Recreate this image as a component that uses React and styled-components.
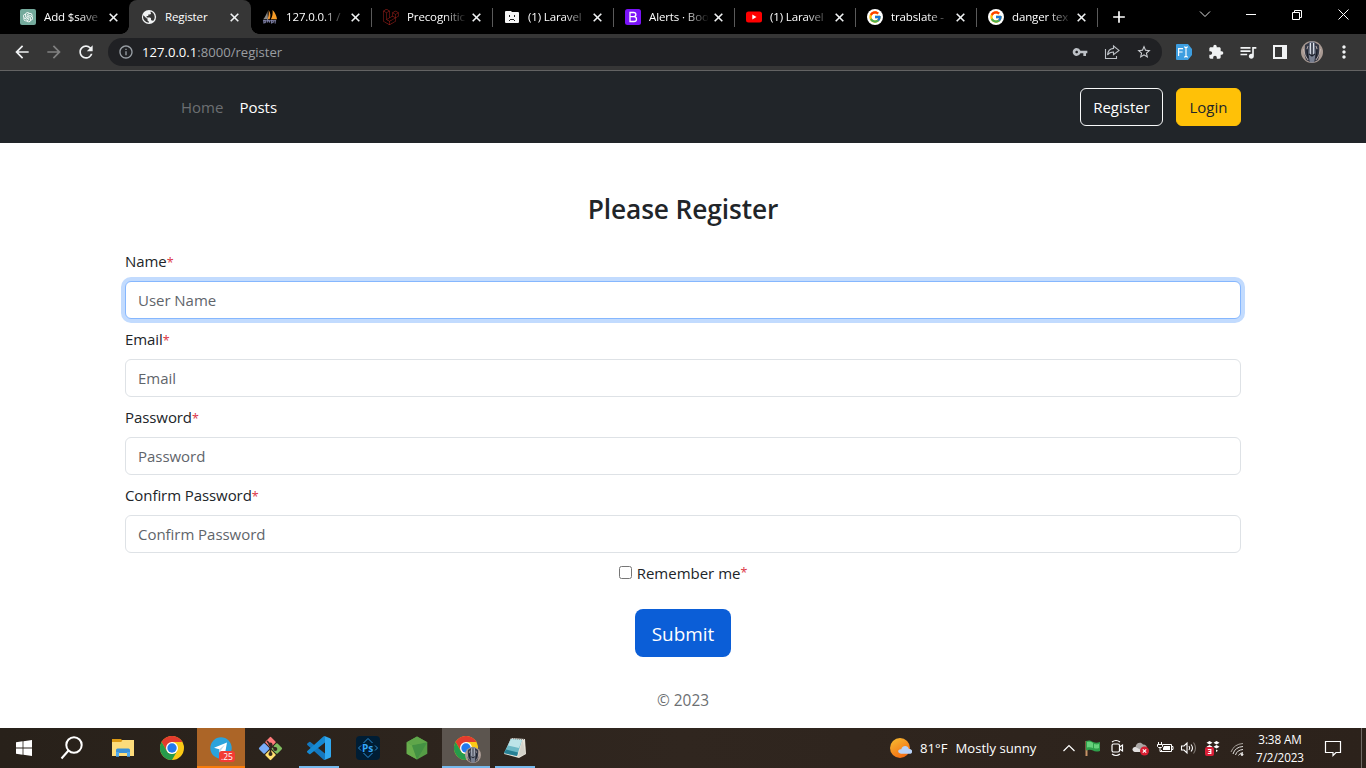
import React from "react";
import styled, { createGlobalStyle } from "styled-components";
import {
  MdArrowBack, MdArrowForward, MdRefresh, MdVpnKey, MdStarBorder, MdExtension,
  MdQueueMusic, MdMoreVert, MdAdd, MdInfoOutline,
} from "react-icons/md";
import { FaLaravel } from "react-icons/fa";
import { FcGoogle } from "react-icons/fc";
import { AiOutlineOpenAI } from "react-icons/ai";

const Global = createGlobalStyle`
  * { box-sizing: border-box; }
  body {
    margin: 0;
    background: #fff;
    font-family: "Open Sans", "Noto Sans", sans-serif;
    font-size: 15px;
    line-height: 24px;
    color: #212529;
    overflow: hidden;
  }
  svg { display: block; flex: none; }
`;

const Screen = styled.div`
  width: 1366px;
  height: 768px;
  display: flex;
  flex-direction: column;
`;

/* ---------- browser chrome ---------- */
const TabStrip = styled.div`
  height: 34px;
  flex: none;
  background: #000;
  display: flex;
  padding-left: 8px;
`;
const Tab = styled.div`
  position: relative;
  width: 121px;
  height: 34px;
  display: flex;
  align-items: center;
  padding: 0 11px 0 12px;
  background: ${(p) => (p.$active ? "#363636" : "transparent")};
  border-radius: 8px 8px 0 0;
  ${(p) =>
    p.$active &&
    `width: 122px; margin-right: -1px; padding-right: 12px;
    &::before, &::after {
      content: ""; position: absolute; bottom: 0; width: 8px; height: 8px;
    }
    &::before { left: -8px; background: radial-gradient(circle at 0 0, transparent 7.5px, #363636 8px); }
    &::after { right: -8px; background: radial-gradient(circle at 100% 0, transparent 7.5px, #363636 8px); }`}
`;
const TabTitle = styled.span`
  width: 64px;
  margin-left: 8px;
  white-space: nowrap;
  font-size: 11.5px;
  line-height: 16px;
  letter-spacing: -0.12px;
  color: #fff;
  ${(p) => p.$fade && "mask-image: linear-gradient(90deg, #000 36px, transparent 60px);"}
`;
const CloseBox = styled.span`
  margin-left: auto;
  display: flex;
`;
const Separator = styled.i`
  position: absolute;
  right: -1px;
  top: 8px;
  width: 1px;
  height: 19px;
  background: #5a5a5a;
`;
const NewTab = styled.div`
  width: 44px;
  display: flex;
  align-items: center;
  justify-content: center;
  color: #fff;
`;
const WindowControls = styled.div`
  margin-left: auto;
  display: flex;
  height: 29px;
`;
const Control = styled.div`
  width: 46px;
  display: flex;
  align-items: center;
  justify-content: center;
`;
const Toolbar = styled.div`
  height: 37px;
  flex: none;
  background: #363636;
  border-bottom: 1px solid #636363;
  display: flex;
  align-items: center;
  padding: 0 6px;
`;
const ToolButton = styled.div`
  width: 32px;
  height: 32px;
  display: flex;
  align-items: center;
  justify-content: center;
  color: ${(p) => p.$color || "#f1f3f4"};
`;
const Omnibox = styled.div`
  width: 1054px;
  height: 28px;
  margin-right: 6px;
  margin-left: 6px;
  border-radius: 14px;
  background: #202124;
  display: flex;
  align-items: center;
  padding: 0 2px 0 10px;
`;
const Url = styled.span`
  flex: 1;
  margin-left: 8px;
  font-size: 13.1px;
  line-height: 20px;
  color: #9a9da1;
  b { font-weight: 400; color: #fff; }
`;

/* ---------- page ---------- */
const Header = styled.header`
  height: 72px;
  flex: none;
  background: #212529;
  display: flex;
  align-items: center;
  padding: 0 125px 0 181px;
`;
const NavLink = styled.a`
  margin-right: 16px;
  color: ${(p) => (p.$muted ? "#6c6f72" : "#fff")};
`;
const HeaderButton = styled.button`
  width: ${(p) => p.$width}px;
  height: 38px;
  padding: 0;
  font: inherit;
  border-radius: 6px;
  border: 1px solid ${(p) => (p.$warning ? "#ffc107" : "#f8f9fa")};
  background: ${(p) => (p.$warning ? "#ffc107" : "transparent")};
  color: ${(p) => (p.$warning ? "#212529" : "#fff")};
`;
const ButtonGroup = styled.div`
  display: flex;
  gap: 13px;
  margin-left: auto;
`;
const Form = styled.form`
  flex: 1;
  display: flex;
  flex-direction: column;
  padding: 49px 125px 0;
`;
const Title = styled.h1`
  margin: 0 0 22px;
  font-size: 26.3px;
  font-weight: 600;
  line-height: 35px;
  text-align: center;
  letter-spacing: -0.1px;
`;
const Label = styled.label`
  height: 24px;
  margin-bottom: 8px;
  letter-spacing: -0.08px;
`;
const Required = styled.span`
  color: #dc3545;
  font-size: 12.5px;
`;
const Input = styled.input`
  height: 38px;
  margin-bottom: 8px;
  padding: 0 12px;
  border: 1px solid ${(p) => (p.$focused ? "#86b7fe" : "#dee2e6")};
  border-radius: 6px;
  outline: none;
  box-shadow: ${(p) => (p.$focused ? "0 0 0 4px #c2dbfe" : "none")};
  font: inherit;
  letter-spacing: -0.04px;
  &::placeholder { color: #5f656b; opacity: 1; }
`;
const Remember = styled.label`
  height: 24px;
  display: flex;
  justify-content: center;
  align-items: center;
  input { width: 13px; height: 13px; margin: -2px 5px 0 0; }
`;
const Submit = styled.button`
  width: 96px;
  height: 48px;
  margin: 24px auto 32px;
  padding: 1px 0 0;
  border: 0;
  border-radius: 8px;
  background: #0b5ed7;
  color: #fff;
  font: 18.9px/28px "Open Sans", sans-serif;
`;
const Copyright = styled.p`
  margin: 0;
  text-align: center;
  font-size: 15.4px;
  color: #6c6f72;
`;

/* ---------- taskbar ---------- */
const Taskbar = styled.footer`
  height: 40px;
  flex: none;
  background: linear-gradient(90deg, #28211a, #30261f 50%, #2c221b);
  display: flex;
  color: #fff;
`;
const TaskButton = styled.div`
  width: 48px;
  height: 40px;
  margin-right: ${(p) => p.$gap ?? 1}px;
  display: flex;
  align-items: center;
  justify-content: center;
  background: ${(p) => p.$bg || "transparent"};
  ${(p) => p.$line && `box-shadow: inset 0 -2px 0 ${p.$line};`}
`;
const Underlined = styled(TaskButton)`
  background: linear-gradient(#76b9ed, #76b9ed) center bottom / 40px 2px no-repeat;
`;
const Badged = styled.div`
  position: relative;
`;
const Badge = styled.span`
  position: absolute;
  left: 9px;
  top: 14px;
  width: 16px;
  height: 11px;
  border-radius: 3px;
  background: #f23c34;
  font: 8.5px/11px "Open Sans", sans-serif;
  text-align: center;
  color: #fff;
`;
const ProfileBadge = styled.div`
  position: absolute;
  left: 11px;
  top: 11px;
`;
const Weather = styled.div`
  margin-left: auto;
  width: 169px;
  display: flex;
  align-items: center;
  font-size: 13.15px;
  white-space: nowrap;
  span { margin-left: 8px; }
`;
const TrayIcon = styled.div`
  width: 24px;
  display: flex;
  align-items: center;
  justify-content: center;
`;
const Tray = styled.div`
  display: flex;
  margin: 0 1px 0 -1px;
`;
const Clock = styled.div`
  width: 60px;
  margin-right: 2px;
  padding-top: 2px;
  text-align: center;
  font-size: 11.7px;
  line-height: 18px;
  letter-spacing: -0.1px;
`;
const Notifications = styled.div`
  width: 42px;
  display: flex;
  align-items: center;
  justify-content: center;
`;
const ShowDesktop = styled.div`
  width: 5px;
  margin-left: 7px;
  border-left: 1px solid #706a65;
`;

/* ---------- drawings ---------- */
const CloseIcon = () => (
  <svg width="9" height="9" viewBox="0 0 9 9" stroke="#f1f3f4" strokeWidth="1.6">
    <path d="M.7.7l7.600 7.600M8.300.7L.7 8.300" />
  </svg>
);
const OpenAiIcon = () => (
  <svg width="16" height="16" viewBox="0 0 16 16">
    <rect width="16" height="16" rx="2" fill="#74aa9c" />
    <AiOutlineOpenAI x="1.5" y="1.5" size={13} color="#fff" />
  </svg>
);
const GlobeIcon = () => (
  <svg width="16" height="16" viewBox="0 0 16 16">
    <circle cx="8" cy="8" r="7.1" fill="#f1f3f4" />
    <path d="M2.4 6.2l3 3 1.1.2v2l1.3 1.2v1.1A5.7 5.7 0 0 1 2.4 6.2zM9.6 2.5c2.5.8 4.1 3 4.1 5.5 0 1.7-.7 3.1-1.7 4.1-.2-.6-.8-.9-1.5-.9H10V9.3L9 8.5H5.6V7h1.7V5.4H9c.6 0 1-.5 1-1.1l-.4-.5z" fill="#363636" />
  </svg>
);
const PhpMyAdminIcon = () => (
  <svg width="16" height="16" viewBox="0 0 17 16">
    <path d="M5.8 1.5C4.8 5 3.3 8 1.3 10.5h5z" fill="#8b8b8b" />
    <path d="M7 .5c2.2 3.2 2.5 6.4 1.1 10H5.8C7 7 7.5 4 7 .5z" fill="#e8963a" />
    <path d="M11.2.5c3.2 3.2 4.3 6.6 4.8 10H9.4C11 7.2 11.7 4.5 11.2.5z" fill="#f59c27" />
    <path d="M1 12h14M2 15v-4m0 1h2v2H2M6 10v4m0-2h2v2m2 1v-4m0 1h2v2h-2m4-3v4" stroke="#8486ad" fill="none" />
  </svg>
);
const SadFolderIcon = () => (
  <svg width="16" height="16" viewBox="0 0 16 16">
    <path d="M2 2h5l1 1h6q1 0 1 1v9q0 1-1 1H2q-1 0-1-1V3q0-1 1-1z" fill="#f5f5f5" />
    <path d="M5 6h1v2H5zM10 6h1v2h-1zM6 10h4v1H6zM5 11h1v1H5zM10 11h1v1h-1z" fill="#222" />
  </svg>
);
const BootstrapIcon = () => (
  <svg width="16" height="16" viewBox="0 0 16 16">
    <rect width="16" height="16" rx="2.5" fill="#7a13f8" />
    <path d="M5 3.5h3.6c3 0 3 3.8.2 4.2H5zM5 7.7h4c3.4.2 3.2 4.8 0 4.8H5z" fill="none" stroke="#fff" strokeWidth="1.3" />
  </svg>
);
const YouTubeIcon = () => (
  <svg width="16" height="16" viewBox="0 0 16 16">
    <rect y="2.5" width="16" height="11" rx="2.5" fill="#f00" />
    <path d="M6.3 5.6v4.8L10.5 8z" fill="#fff" />
  </svg>
);
const GoogleIcon = () => (
  <svg width="16" height="16" viewBox="0 0 16 16">
    <circle cx="8" cy="8" r="8" fill="#fff" />
    <FcGoogle x="1.2" y="1.2" size={13.6} />
  </svg>
);
const ShareIcon = () => (
  <svg width="16" height="16" viewBox="0 0 16 16" fill="none" stroke="#bdc1c6" strokeWidth="1.1">
    <path d="M1.500 5v9.500h11V12M9.500 2l5.500 4.400-5.500 4.200V8C6.500 8 4.800 9 3.500 11c.3-3.8 2.5-6.2 6-6.600z" />
  </svg>
);
const FontExtIcon = () => (
  <svg width="16" height="16" viewBox="0 0 16 16">
    <path d="M1 0h11l4 5v6l-4 5H1q-1 0-1-1V1q0-1 1-1z" fill="#3d9ee0" />
    <path d="M2.6 12V4.6H7M2.6 8h4M8 3h1l1 1 1-1h1M10 4v8M8 13h1l1-1 1 1h1" stroke="#fff" fill="none" strokeWidth="1.15" />
  </svg>
);
const SidePanelIcon = () => (
  <svg width="14" height="14" viewBox="0 0 14 14">
    <path d="M0 0h14v14H0zM2 2v10h7V2z" fill="#f1f3f4" fillRule="evenodd" />
  </svg>
);
const Avatar = ({ size = 22 }) => (
  <svg width={size} height={size} viewBox="0 0 22 22">
    <circle cx="11" cy="11" r="11" fill="#a99a93" />
    <path d="M4 4l5-3v20l-4-2-1.500-5z" fill="#343846" />
    <path d="M18 4l-5-3v20l4-2 1.500-5z" fill="#343846" />
    <path d="M8.500 .5h5l1 11-.5 5-1 5h-4l-1-5-.5-5z" fill="#787f90" />
    <path d="M9.500 2l.3 12M12.500 2l-.3 12" stroke="#dfe4ed" strokeWidth="1.100" />
    <path d="M11 2v13M6 9l1 8M16 9l-1 8M8 13l3 2 3-2" stroke="#191d28" strokeWidth="1.100" fill="none" />
    <path d="M2.500 8l1.500 6 3 5M19.500 8L18 14l-3 5M7 5l-1 3M15 5l1 3" stroke="#d0c1bb" fill="none" strokeWidth=".8" />
  </svg>
);
const WindowsIcon = () => (
  <svg width="16" height="16" viewBox="0 0 16 16" fill="#fff">
    <path d="M0 2.2L6.6 1.3V7.6H0zM7.4 1.2L16 0v7.6H7.4zM0 8.4h6.6v6.3L0 13.8zM7.4 8.4H16V16l-8.6-1.2z" />
  </svg>
);
const SearchIcon = () => (
  <svg width="24" height="24" viewBox="0 0 24 24" fill="none" stroke="#fff" strokeWidth="2">
    <circle cx="14" cy="9" r="7.7" /><path d="M8.5 14.5L1.5 22.5" />
  </svg>
);
const ExplorerIcon = () => (
  <svg width="22" height="20" viewBox="0 0 22 20">
    <path d="M0 1h8.5l1.5 1h12v16H0z" fill="#e4a01c" />
    <path d="M0 4h9l1.500-2H22v16H0z" fill="#fddc7b" />
    <path d="M0 4h9l1-1.500L8.600 1H0z" fill="#dc9a14" />
    <path d="M4 18.500v-6.500q0-1.500 1.500-1.500h11Q18 10.500 18 12v6.500h-3v-3.500H7v3.500z" fill="#3b91d8" />
    <path d="M4 14v4.500h3V14zM15 14v4.500h3V14z" fill="#4faaf0" />
  </svg>
);
const ChromeIcon = () => (
  <svg width="24" height="24" viewBox="0 0 24 24">
    <circle cx="12" cy="12" r="12" fill="#fbc916" />
    <path d="M12 6h10.400A12 12 0 0 0 1.600 6L6.800 15z" fill="#e33b2e" />
    <path d="M1.600 6A12 12 0 0 0 12 24L17.200 15A6 6 0 0 1 6.800 15z" fill="#269b4b" />
    <circle cx="12" cy="12" r="6" fill="#fff" />
    <circle cx="12" cy="12" r="4.7" fill="#2379ed" />
  </svg>
);
const TelegramIcon = () => (
  <svg width="22" height="22" viewBox="0 0 22 22">
    <circle cx="11" cy="11" r="10.700" fill="#2ba3dc" />
    <path d="M4 10.800L17 5.500 15 16.500l-3.500-2.600-1.900 2-.5-3.600z" fill="#fff" />
    <path d="M9 12.500L15 7.500l-4 5.800-1.600 2z" fill="#bed9e9" />
  </svg>
);
const GitIcon = () => (
  <svg width="25" height="25" viewBox="0 0 25 25">
    <g transform="rotate(45 12.500 12.500)">
      <rect x="4" y="4" width="8" height="8" rx="1" fill="#ff7b7b" />
      <rect x="13" y="4" width="8" height="8" rx="1" fill="#80bd5f" />
      <rect x="4" y="13" width="8" height="8" rx="1" fill="#78acf8" />
      <rect x="13" y="13" width="8" height="8" rx="1" fill="#ffe071" />
    </g>
    <path d="M9 5l3.500 4v9M12.500 9l5 4" stroke="#342720" strokeWidth="1.700" fill="none" />
    <circle cx="12.500" cy="8.500" r="2" fill="#342720" /><circle cx="17.300" cy="13" r="2" fill="#342720" /><circle cx="12.500" cy="18" r="2" fill="#342720" />
  </svg>
);
const CodeIcon = () => (
  <svg width="24" height="24" viewBox="0 0 24 24">
    <path d="M.3 7.500L2.200 6q.6-.4 1.200 0L18 17.500V24q-1 0-1.600-.6L.3 9q-.6-.7 0-1.500z" fill="#1478bf" />
    <path d="M.3 16.500L2.200 18q.6.400 1.200 0L18 6.500V0q-1 0-1.600.6L.3 15q-.6.700 0 1.500z" fill="#1689d2" />
    <path d="M17.500 0l5.500 2.300q1 .5 1 1.500v16.400q0 1-1 1.500L17.500 24q.5-.3.500-1V1q0-.7-.5-1z" fill="#30a8ef" />
  </svg>
);
const PsText = styled.text`
  font: 700 10px "Open Sans", sans-serif;
`;
const PhotoshopIcon = () => (
  <svg width="24" height="24" viewBox="0 0 24 24">
    <rect width="24" height="24" rx="4" fill="#001d34" />
    <path d="M7.500 7L12 2.500 16.500 7M7.500 17L12 21.500 16.500 17M5 9.500L2.500 12l2.500 2.500M19 9.500l2.500 2.500-2.500 2.500" fill="none" stroke="#2a8ed6" />
    <PsText x="6" y="15.500" fill="#35a6fa">Ps</PsText>
  </svg>
);
const NodeIcon = () => (
  <svg width="22" height="24" viewBox="0 0 22 24">
    <path d="M11 .5l10.300 5.800v11.400L11 23.500.7 17.700V6.300z" fill="#559c45" />
    <path d="M.7 6.300L6 9.300 11 23.500.7 17.700z" fill="#68ad4c" />
    <path d="M6 9.300L21.300 6.300 11 23.500z" fill="#449143" />
    <path d="M11 .5l10.300 5.800L6 9.300.7 6.300z" fill="#5fa64a" />
  </svg>
);
const NotepadIcon = () => (
  <svg width="24" height="24" viewBox="0 0 24 24">
    <path d="M8 2l14 1 1 15-7 4-15-4z" fill="#e6e3d9" />
    <path d="M8 3l11 1-5 16L1 17z" fill="#6bb8c5" />
    <path d="M8 3l11 1-3 8L5 9.500z" fill="#bce4e8" />
    <path d="M1 17l13 3 1-3.500-12-3z" fill="#267f93" />
    <path d="M19.500 4l3 14-7.500 3z" fill="#d3d2c9" />
    <path d="M8 2.500l14 1" stroke="#777" strokeDasharray="1 1" />
  </svg>
);
const SunIcon = () => (
  <svg width="23" height="22" viewBox="0 0 23 22">
    <defs><linearGradient id="sun" x2=".6" y2="1"><stop stopColor="#f8bf32" /><stop offset="1" stopColor="#f36d13" /></linearGradient></defs>
    <circle cx="11" cy="11" r="10" fill="url(#sun)" />
    <path d="M12 16.700c-4-.2-3.600-5 .3-4.500 1-4.300 6.800-4.200 7.600-.2 4.300-.2 4.300 4.700.8 4.700z" fill="#b8d2f8" />
  </svg>
);
const ChevronIcon = () => (
  <svg width="14" height="8" viewBox="0 0 14 8" fill="none" stroke="#fff" strokeWidth="1.200"><path d="M1.500 7L7 1.500 12.500 7" /></svg>
);
const FlagIcon = () => (
  <svg width="16" height="17" viewBox="0 0 16 17">
    <path d="M1.500 1v15" stroke="#c99267" strokeWidth="2" />
    <path d="M1 1c3-1 5-.5 7 1 2 1 4.500 1 7 0v9c-3 1-5.500.7-7-.4-2-1.200-4.200-1-7-.2z" fill="#2fa04b" />
    <path d="M2 2c3-.7 4.500 0 6 1v5C6 7 4 7 2 7.500zM9 4q3 .8 5 0v4q-3 1-5 0z" fill="#66d17b" />
  </svg>
);
const MeetIcon = () => (
  <svg width="14" height="18" viewBox="0 0 14 18" fill="none" stroke="#fff" strokeWidth="1.200">
    <rect x="2" y="5" width="7.500" height="8" rx="1.500" /><path d="M9.500 8l3-2v6l-3-2M2 3q4-3 8 0M2 15q4 3 8 0" />
  </svg>
);
const CloudIcon = () => (
  <svg width="18" height="15" viewBox="0 0 18 15">
    <path d="M3 11C-.5 10.500 0 6 3.500 6 4 1.500 9 .500 11 3.500c3 0 4 2 4 4l-6 3.500z" fill="#aaa7a5" />
    <path d="M3 11C-.5 10.500 0 6 3.500 6L9 9v2z" fill="#e1dfde" />
    <circle cx="12.500" cy="10" r="4.500" fill="#d81f32" /><path d="M10.800 8.300l3.400 3.400M14.200 8.300l-3.400 3.400" stroke="#fff" strokeWidth="1.200" />
  </svg>
);
const BatteryIcon = () => (
  <svg width="17" height="12" viewBox="0 0 17 12">
    <path d="M6 2.500h8.500v7h-10V8M14.500 4.500h1.500v3h-1.500M1.500 0v2.500M4.500 0v2.500M.5 2.500h5v2l-1 1h-3l-1-1zM3 5.500v4h2" fill="none" stroke="#fff" />
    <path d="M7 4h6v4H6V6z" fill="#fff" />
  </svg>
);
const SpeakerIcon = () => (
  <svg width="18" height="14" viewBox="0 0 18 14" fill="none" stroke="#fff" strokeWidth="1.100">
    <path d="M1.500 5H4l3-3v10L4 9H1.500zM9 5q1.500 2 0 4M11 3.500q3 3.500 0 7" /><path d="M13.500 1.500q4 5.500 0 11" stroke="#807973" />
  </svg>
);
const DropboxIcon = () => (
  <svg width="16" height="16" viewBox="0 0 16 16">
    <path d="M4.500 1l3 1.700-3 1.700-3-1.700zM11.500 1l3 1.700-3 1.700-3-1.700zM4.500 5l3 1.700-3 1.700-3-1.700zM11.500 5l3 1.700-3 1.700-3-1.700zM11 9.500l2 1.200-2 1.200z" fill="#fff" />
    <rect x="0" y="7" width="9" height="9" rx="2" fill="#d91f38" />
    <path d="M2.800 9.500h3v4h-3M3.500 11.500h2.300" stroke="#fff" fill="none" strokeWidth="1.200" />
  </svg>
);
const WifiIcon = () => (
  <svg width="15" height="15" viewBox="0 0 15 15" fill="none" stroke="#e4e2e0">
    <path d="M1 11Q4 3 13 2.500" stroke="#a8a29c" /><path d="M3 13Q5 6 13 5.500M5.500 14Q7 9 13 8.500M8.500 14.500q1-2.500 4.500-3" /><circle cx="12" cy="13.500" r="1" fill="#fff" />
  </svg>
);
const NoteIcon = () => (
  <svg width="18" height="17" viewBox="0 0 18 17" fill="none" stroke="#fff" strokeWidth="1.200">
    <path d="M1.500 1.500h15v11h-4.500l-3 3v-3h-7.500z" />
  </svg>
);

const tabs = [
  { title: "Add $save", icon: <OpenAiIcon />, fade: true },
  { title: "Register", icon: <GlobeIcon />, active: true },
  { title: "127.0.0.1 /", icon: <PhpMyAdminIcon />, fade: true, line: true },
  { title: "Precognitic", icon: <FaLaravel size={16} color="#a3201b" />, fade: true, line: true },
  { title: "(1) Laravel", icon: <SadFolderIcon />, fade: true, line: true },
  { title: "Alerts · Boo", icon: <BootstrapIcon />, fade: true, line: true },
  { title: "(1) Laravel", icon: <YouTubeIcon />, fade: true, line: true },
  { title: "trabslate -", icon: <GoogleIcon />, fade: true, line: true },
  { title: "danger tex", icon: <GoogleIcon />, fade: true, line: true },
];

const fields = [
  { label: "Name", placeholder: "User Name", focused: true },
  { label: "Email", placeholder: "Email" },
  { label: "Password", placeholder: "Password" },
  { label: "Confirm Password", placeholder: "Confirm Password" },
];

const tray = [ChevronIcon, FlagIcon, MeetIcon, CloudIcon, BatteryIcon, SpeakerIcon, DropboxIcon, WifiIcon];

export default function App() {
  return (
    <Screen>
      <Global />
      <TabStrip>
        {tabs.map((t, i) => (
          <Tab key={i} $active={t.active}>
            {t.icon}
            <TabTitle $fade={t.fade}>{t.title}</TabTitle>
            <CloseBox><CloseIcon /></CloseBox>
            {t.line && <Separator />}
          </Tab>
        ))}
        <NewTab><MdAdd size={20} /></NewTab>
        <WindowControls>
          <Control><svg width="12" height="7" viewBox="0 0 12 7" fill="none" stroke="#ddd"><path d="M1 .5l5 5 5-5" /></svg></Control>
          <Control><svg width="10" height="1"><rect width="10" height="1" fill="#fff" /></svg></Control>
          <Control><svg width="10" height="10" viewBox="0 0 10 10" fill="none" stroke="#fff"><path d="M.5 2.500h7v7h-7zM2.500 2.500v-2h7v7h-2" /></svg></Control>
          <Control><svg width="11" height="11" viewBox="0 0 11 11" stroke="#fff"><path d="M.5.5l10 10M10.500.5l-10 10" /></svg></Control>
        </WindowControls>
      </TabStrip>

      <Toolbar>
        <ToolButton><MdArrowBack size={20} /></ToolButton>
        <ToolButton $color="#818181"><MdArrowForward size={20} /></ToolButton>
        <ToolButton><MdRefresh size={20} /></ToolButton>
        <Omnibox>
          <MdInfoOutline size={16} color="#9aa0a6" />
          <Url><b>127.0.0.1</b>:8000/register</Url>
          <ToolButton $color="#bdc1c6"><MdVpnKey size={16} /></ToolButton>
          <ToolButton><ShareIcon /></ToolButton>
          <ToolButton $color="#cdd0d4"><MdStarBorder size={16} /></ToolButton>
        </Omnibox>
        <ToolButton><FontExtIcon /></ToolButton>
        <ToolButton><MdExtension size={16} /></ToolButton>
        <ToolButton><MdQueueMusic size={20} /></ToolButton>
        <ToolButton><SidePanelIcon /></ToolButton>
        <ToolButton><Avatar /></ToolButton>
        <ToolButton><MdMoreVert size={20} /></ToolButton>
      </Toolbar>

      <Header>
        <NavLink $muted>Home</NavLink>
        <NavLink>Posts</NavLink>
        <ButtonGroup>
          <HeaderButton $width={83}>Register</HeaderButton>
          <HeaderButton $width={65} $warning>Login</HeaderButton>
        </ButtonGroup>
      </Header>

      <Form>
        <Title>Please Register</Title>
        {fields.map((f) => (
          <React.Fragment key={f.label}>
            <Label>{f.label}<Required>*</Required></Label>
            <Input placeholder={f.placeholder} $focused={f.focused} />
          </React.Fragment>
        ))}
        <Remember><input type="checkbox" />Remember me<Required>*</Required></Remember>
        <Submit type="button">Submit</Submit>
        <Copyright>© 2023</Copyright>
      </Form>

      <Taskbar>
        <TaskButton $gap={0}><WindowsIcon /></TaskButton>
        <TaskButton $gap={3}><SearchIcon /></TaskButton>
        <TaskButton><ExplorerIcon /></TaskButton>
        <TaskButton><ChromeIcon /></TaskButton>
        <TaskButton $bg="#ac6527" $line="#f77b0b"><Badged><TelegramIcon /><Badge>.25</Badge></Badged></TaskButton>
        <TaskButton><GitIcon /></TaskButton>
        <Underlined><CodeIcon /></Underlined>
        <TaskButton><PhotoshopIcon /></TaskButton>
        <TaskButton><NodeIcon /></TaskButton>
        <TaskButton $bg="#5c554f" $line="#76b9ed"><Badged><ChromeIcon /><ProfileBadge><Avatar size={16} /></ProfileBadge></Badged></TaskButton>
        <Underlined><NotepadIcon /></Underlined>
        <Weather><SunIcon /><span>81°F</span><span>Mostly sunny</span></Weather>
        <Tray>{tray.map((Icon, i) => <TrayIcon key={i}><Icon /></TrayIcon>)}</Tray>
        <Clock>3:38 AM<br />7/2/2023</Clock>
        <Notifications><NoteIcon /></Notifications>
        <ShowDesktop />
      </Taskbar>
    </Screen>
  );
}
